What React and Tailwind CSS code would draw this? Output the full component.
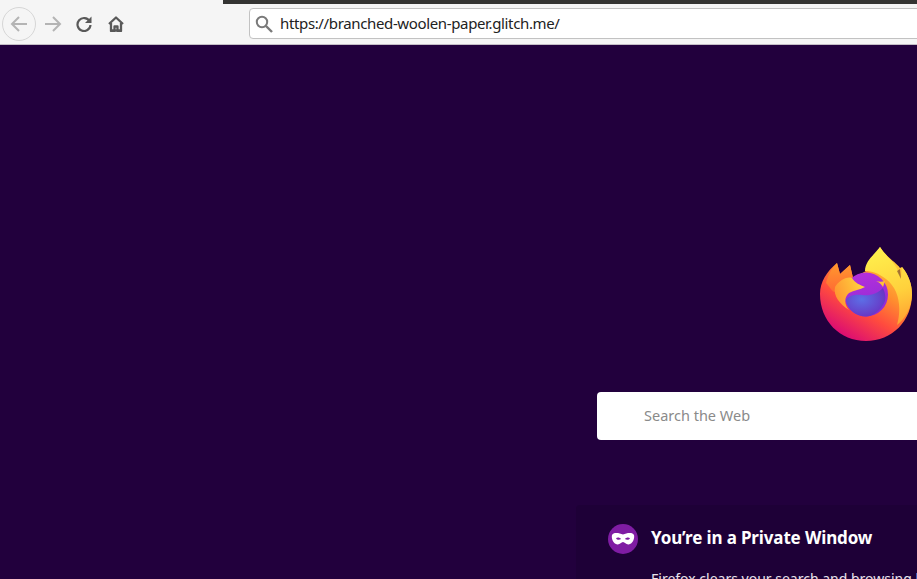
import React from "react";

function FirefoxLogo() {
  return (
    <svg width="117" height="115" viewBox="0 0 117 115" className="block">
      <defs>
        <linearGradient id="fxBase" x1="0.85" y1="0.2" x2="0.35" y2="1">
          <stop offset="0" stopColor="#ffc83a" />
          <stop offset="0.35" stopColor="#ff8f2e" />
          <stop offset="0.65" stopColor="#ff4b3e" />
          <stop offset="1" stopColor="#dc0d72" />
        </linearGradient>
        <linearGradient id="fxLeft" x1="0.5" y1="0" x2="0.5" y2="1">
          <stop offset="0" stopColor="#ff9a2e" />
          <stop offset="1" stopColor="#ff6a33" />
        </linearGradient>
        <linearGradient id="fxFlame" x1="0.4" y1="0" x2="0.6" y2="1">
          <stop offset="0" stopColor="#fff04d" />
          <stop offset="0.6" stopColor="#ffd13c" />
          <stop offset="1" stopColor="#ffa232" />
        </linearGradient>
        <linearGradient id="fxHead" x1="0" y1="0.7" x2="1" y2="0.3">
          <stop offset="0" stopColor="#ff9130" />
          <stop offset="1" stopColor="#ffd53f" />
        </linearGradient>
        <linearGradient id="fxPurple" x1="0.4" y1="0" x2="0.6" y2="1">
          <stop offset="0" stopColor="#b52fdc" />
          <stop offset="1" stopColor="#8a2cd4" />
        </linearGradient>
        <radialGradient id="fxBlue" cx="0.4" cy="0.4" r="0.7">
          <stop offset="0" stopColor="#5c6fe6" />
          <stop offset="1" stopColor="#6a2fc0" />
        </radialGradient>
      </defs>
      <path
        d="M37 28 L40 39 L50 30 L53 43 L66 36 L80 12 C88 24 97 28 100 33 L102 32 C108 40 112 48 112 59 C112 86 92 106 66 106 C40 106 20 86 20 59 C20 47 27 36 37 28 Z"
        fill="url(#fxBase)"
      />
      <path
        d="M37 28 L40 39 L50 30 L53 43 C44 46 38 50 36 56 C34 60 30 52 26 48 C28 40 32 33 37 28 Z"
        fill="url(#fxLeft)"
      />
      <path
        d="M65 36 C65 26 74 20 80 12 C86 22 97 28 101 43 L102 32 C109 40 112 50 112 60 C111 74 105 84 97 90 C102 72 99 54 86 44 C78 38 72 36 65 36 Z"
        fill="url(#fxFlame)"
      />
      <path d="M100 34 L101 44 L97 36 Z" fill="#5a2a2a" opacity="0.55" />
      <circle cx="66" cy="59.500" r="22" fill="url(#fxPurple)" />
      <path
        d="M46 65 C48 61 54 59 62 60 C70 61 77 59 83 53 C85 57 86 62 85 66 C81 76 72 81.500 66 81.500 C56 81.500 47 74 46 65 Z"
        fill="url(#fxBlue)"
      />
      <path
        d="M35 52 C38 47 46 41 52 43 C55 48 60 50 65 52 C60 55 54 55 49 58 C44 62 44 70 49 75 C40 69 33 61 35 52 Z"
        fill="url(#fxHead)"
      />
      <path d="M76 46 C79 47 82 47 85 46 L83 52 C81 49 79 47 76 46 Z" fill="#ffc13a" />
    </svg>
  );
}

export default function App() {
  const ui = { fontFamily: '"Noto Sans", sans-serif' };
  return (
    <div className="w-[917px] h-[579px] overflow-hidden flex flex-col bg-[#22003d]" style={ui}>
      <header className="h-[45px] shrink-0 bg-[#f5f5f5] border-b border-[#c4bec6] relative flex items-center pl-[2px] pr-0">
        <div className="absolute top-0 left-[223px] right-0 h-[4px] bg-[#343432]" />
        <button className="w-[34px] h-[34px] rounded-full border border-[#d6d6d6] flex items-center justify-center mt-[3px]">
          <svg width="18" height="16" viewBox="0 0 18 16" fill="none" stroke="#b4b4b4" strokeWidth="2">
            <path d="M17 8H2M9 1L2 8l7 7" />
          </svg>
        </button>
        <button className="ml-[8px] w-[18px] h-[16px] mt-[3px] flex">
          <svg width="18" height="16" viewBox="0 0 18 16" fill="none" stroke="#b4b4b4" strokeWidth="2">
            <path d="M1 8h15M9 1l7 7-7 7" />
          </svg>
        </button>
        <button className="ml-[14px] w-[16px] h-[16px] mt-[3px] flex">
          <svg width="16" height="16" viewBox="0 0 16 16" fill="none" stroke="#595959" strokeWidth="2.200">
            <path d="M13.600 5.200A6.500 6.500 0 1 0 14.500 9" />
            <path d="M15.500 .5v6.500H9z" fill="#595959" stroke="none" />
          </svg>
        </button>
        <button className="ml-[16px] w-[16px] h-[16px] mt-[3px] flex">
          <svg width="16" height="16" viewBox="0 0 16 16" fill="none" stroke="#595959" strokeWidth="2.300" strokeLinejoin="round">
            <path d="M1 8l7-6.500L15 8M3 7v8h3.500v-4.500h3V15H13V7" />
            <path d="M3 14.500h10" />
          </svg>
        </button>
        <div className="ml-[125px] flex-1 h-[31px] mt-[3px] mr-[-4px] bg-white border border-[#c2c2c2] rounded-[4px] flex items-center pl-[5px]">
          <svg width="18" height="18" viewBox="0 0 18 18" fill="none" stroke="#7a7a7a" strokeWidth="2">
            <circle cx="7" cy="7" r="5.200" />
            <path d="M11 11l6 6" strokeWidth="2.400" />
          </svg>
          <span className="ml-[7px] text-[15px] leading-none text-[#222] whitespace-nowrap tracking-[-0.36px]">
            https://branched-woolen-paper.glitch.me/
          </span>
        </div>
      </header>
      <main className="flex-1 min-h-0 overflow-hidden relative flex flex-col items-start pl-[597px] pt-[190px]">
        <div className="ml-[203px] h-[115px] w-[117px] shrink-0">
          <FirefoxLogo />
        </div>
        <div className="mt-[42px] h-[48px] w-[500px] shrink-0 bg-white rounded-[4px] flex items-center pl-[47px] pb-[1px] text-[14.500px] text-[#8a8a8a]">
          Search the Web
        </div>
        <section className="mt-[65px] ml-[-21px] w-[500px] shrink-0 bg-[#1e0037] rounded-[4px] pl-[32px] pt-[19px] flex gap-[13px]">
          <div className="w-[30px] h-[30px] rounded-full bg-[#7f1ca3] flex items-center justify-center shrink-0">
            <svg width="24" height="14" viewBox="0 0 24 14">
              <path
                fillRule="evenodd"
                fill="#fff"
                d="M12 2.500C8 .5 2 0 1 3c-.8 3 1 9 5.500 9.500 2.500.2 3.700-2.500 5.500-2.500s3 2.700 5.500 2.500C22 12 23.800 6 23 3c-1-3-7-2.500-11-.5zM5 6.500c1-1.500 4-1 5 .5-1 1-4 1.200-5-.5zm14 0c-1-1.500-4-1-5 .5 1 1 4 1.200 5-.5z"
              />
            </svg>
          </div>
          <div className="text-white whitespace-nowrap">
            <h1 className="text-[17px] leading-[24px] font-bold mt-[2px] tracking-[-0.14px]">You’re in a Private Window</h1>
            <p className="mt-[19px] text-[14px] leading-[20px] text-[#e8e3ec]">Firefox clears your search and browsing history</p>
          </div>
        </section>
      </main>
    </div>
  );
}
